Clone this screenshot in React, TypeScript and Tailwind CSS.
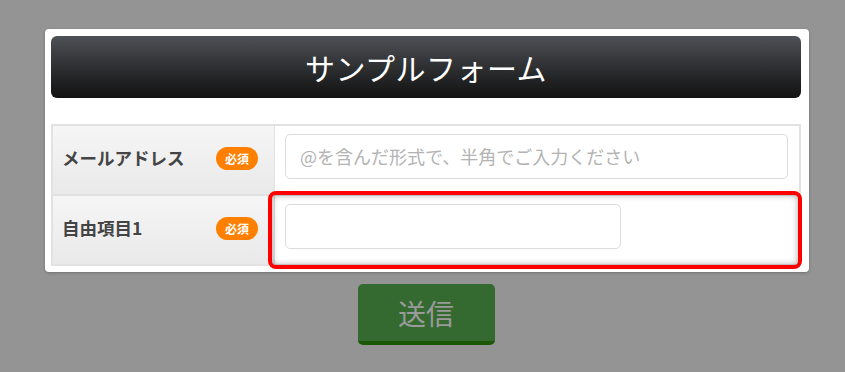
import React from "react";

const jp = { fontFamily: '"Noto Sans CJK JP", "Noto Sans", sans-serif' };

function Badge() {
  return (
    <span className="flex h-[23px] w-[42px] items-center justify-center rounded-full bg-[#ff8000] text-[12px] font-bold text-white">
      必須
    </span>
  );
}

export default function App() {
  return (
    <div className="min-h-screen w-full bg-[#949494] pt-[29px]" style={jp}>
      <div className="relative ml-[45px] w-[764px] rounded-[4px] bg-white pb-[6px] pl-[6px] pr-[8px] pt-[7px] shadow-[0_1px_3px_rgba(0,0,0,0.25)]">
        <div className="flex h-[62px] items-center justify-center rounded-[6px] bg-gradient-to-b from-[#4e5156] to-[#121212]">
          <h1 className="text-[30px] font-normal leading-none tracking-[0.5px] text-white">サンプルフォーム</h1>
        </div>
        <div className="mt-[26px] border-2 border-[#e2e2e2]">
          <div className="flex h-[70px] border-b-2 border-[#e2e2e2]">
            <div className="flex w-[222px] items-center justify-between border-r border-[#e2e2e2] bg-gradient-to-b from-[#f6f6f6] to-[#e9e9e9] pb-[3px] pl-[9px] pr-[16px]">
              <span className="text-[17.5px] font-bold text-[#444]">メールアドレス</span>
              <Badge />
            </div>
            <div className="flex-1 pl-[10px] pr-[11px] pt-[8px]">
              <div className="flex h-[45px] w-full items-center rounded-[5px] border border-[#dcdcdc] bg-white pl-[14px] text-[18px] text-[#b3b3b3]">
                @を含んだ形式で、半角でご入力ください
              </div>
            </div>
          </div>
          <div className="flex h-[68px]">
            <div className="flex w-[222px] items-center justify-between border-r border-[#e2e2e2] bg-gradient-to-b from-[#f6f6f6] to-[#e9e9e9] pb-[3px] pl-[9px] pr-[16px]">
              <span className="text-[17.5px] font-bold text-[#444]">自由項目1</span>
              <Badge />
            </div>
            <div className="flex-1 pl-[10px] pt-[8px]">
              <div className="h-[45px] w-[336px] rounded-[5px] border border-[#dcdcdc] bg-white" />
            </div>
          </div>
        </div>
        <div className="pointer-events-none absolute left-[223px] top-[162px] h-[78px] w-[534px] rounded-[8px] border-[4px] border-[#ff0000] shadow-[inset_0_0_6px_rgba(0,0,0,0.35)]" />
      </div>
      <div className="ml-[45px] mt-[12px] flex w-[764px] justify-center">
        <div className="ml-[-2px] flex h-[61px] w-[137px] items-center justify-center rounded-[5px] border-b-[4px] border-[#1c5706] bg-[#346a30] text-[28px] text-[#9a9a9a]">
          送信
        </div>
      </div>
    </div>
  );
}
